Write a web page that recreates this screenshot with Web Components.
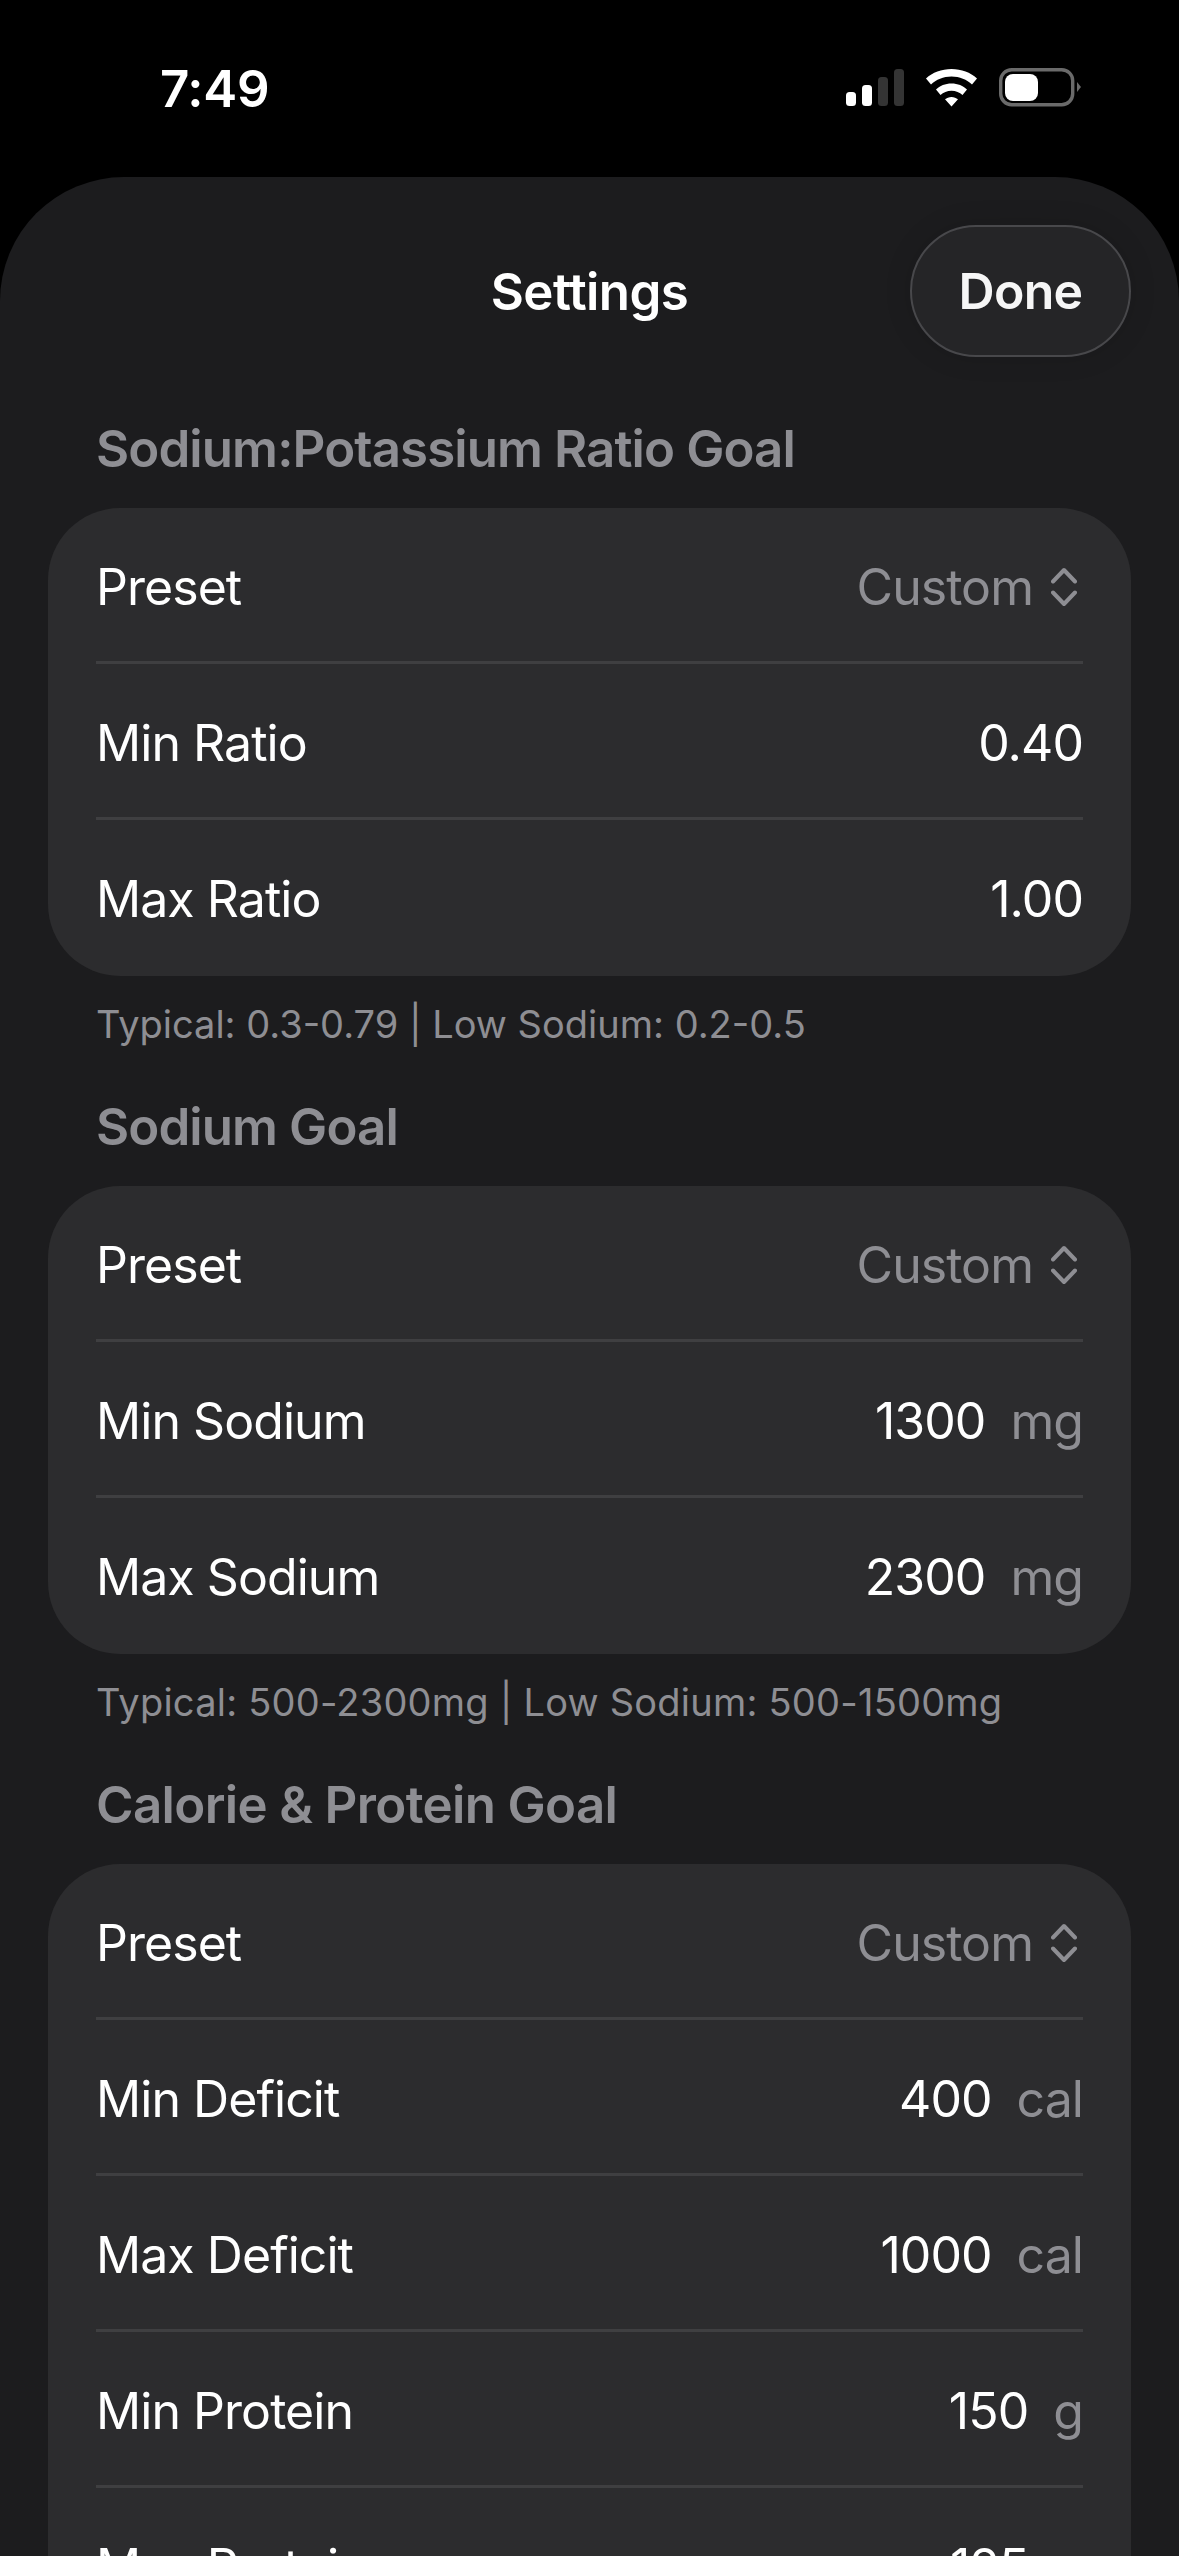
<!DOCTYPE html>
<html><head><meta charset="utf-8"><style>
html,body{margin:0;padding:0;background:#000;height:2556px;overflow:hidden;font-family:Inter,"Liberation Sans",sans-serif;color:#fff}
body{display:flex;flex-direction:column;-webkit-font-smoothing:antialiased}
</style></head><body>
<status-bar time="7:49"></status-bar>
<settings-sheet title-text="Settings" action="Done">
  <settings-section heading="Sodium:Potassium Ratio Goal" note="Typical: 0.3-0.79 | Low Sodium: 0.2-0.5">
    <settings-row label="Preset" picker="Custom"></settings-row>
    <settings-row label="Min Ratio" value="0.40"></settings-row>
    <settings-row label="Max Ratio" value="1.00" last></settings-row>
  </settings-section>
  <settings-section heading="Sodium Goal" note="Typical: 500-2300mg | Low Sodium: 500-1500mg" style="--note-spacing:.22px">
    <settings-row label="Preset" picker="Custom"></settings-row>
    <settings-row label="Min Sodium" value="1300" unit="mg"></settings-row>
    <settings-row label="Max Sodium" value="2300" unit="mg" last></settings-row>
  </settings-section>
  <settings-section heading="Calorie &amp; Protein Goal" style="--head-spacing:-.65px">
    <settings-row label="Preset" picker="Custom"></settings-row>
    <settings-row label="Min Deficit" value="400" unit="cal"></settings-row>
    <settings-row label="Max Deficit" value="1000" unit="cal"></settings-row>
    <settings-row label="Min Protein" value="150" unit="g"></settings-row>
    <settings-row label="Max Protein" value="125" unit="g" last></settings-row>
  </settings-section>
</settings-sheet>
<script>
class StatusBar extends HTMLElement{constructor(){super();const s=this.attachShadow({mode:'open'});
s.innerHTML=`<style>:host{display:flex;flex:none;height:177px;box-sizing:border-box;padding:0 98px 0 160px;justify-content:space-between;align-items:flex-start;background:#000}
.t{font:600 51px/1 Inter,sans-serif;letter-spacing:-.3px;margin-top:63px;color:#fff}
svg{display:block;margin-top:68px}</style>
<div class="t">${this.getAttribute('time')}</div>
<svg width="236" height="40" viewBox="0 0 236 40">
<rect x="1" y="24" width="10" height="14" rx="3.5" fill="#fff"/><rect x="17" y="17" width="10" height="21" rx="3.5" fill="#fff"/>
<rect x="33" y="9" width="10" height="29" rx="3.5" fill="#343434"/><rect x="49" y="1" width="10" height="37" rx="3.5" fill="#343434"/>
<path d="M81 10.500C87.500 4.500 96.500 1 106.500 1S125.500 4.500 132 10.500L127 16.500C122 11.500 114.500 8.500 106.500 8.500S91 11.500 86 16.500Z M91 21.500C94.800 17.800 100.300 15.500 106.500 15.500S118.200 17.800 122 21.500L117.500 27C114.700 24.300 110.800 22.700 106.500 22.700S98.300 24.300 95.500 27Z M100 31.300C101.700 29.800 104 28.900 106.500 28.900S111.300 29.800 113 31.300L106.500 38.500Z" fill="#fff"/>
<rect x="155.700" y="1.700" width="72" height="35" rx="11" fill="none" stroke="#6a6a6a" stroke-width="3.400"/>
<rect x="160" y="6" width="33" height="27" rx="8" fill="#fff"/>
<path d="M232 14L236 19L232 24Z" fill="#6a6a6a"/>
</svg>`}}
customElements.define('status-bar',StatusBar);

class SettingsSheet extends HTMLElement{constructor(){super();const s=this.attachShadow({mode:'open'});
s.innerHTML=`<style>:host{display:block;flex:1;background:#1c1c1e;border-radius:124px 124px 0 0;overflow:hidden;padding:0 48px}
nav{display:grid;grid-template-columns:1fr auto 1fr;align-items:center;height:132px;padding-top:48px;margin-bottom:62px}
h1{grid-column:2;margin:0;font:600 51px/1 Inter,sans-serif;letter-spacing:-.6px;color:#fff}
button{grid-column:3;justify-self:end;width:221px;height:132px;border-radius:66px;background:#252527;border:2.500px solid #48484b;color:#f6f6f6;font:600 50px/1 Inter,sans-serif;letter-spacing:-.7px;padding:0;box-shadow:0 0 28px rgba(0,0,0,.12)}
.c{display:flex;flex-direction:column}</style>
<nav><h1>${this.getAttribute('title-text')}</h1><button>${this.getAttribute('action')}</button></nav>
<div class="c"><slot></slot></div>`}}
customElements.define('settings-sheet',SettingsSheet);

class SettingsSection extends HTMLElement{constructor(){super();const s=this.attachShadow({mode:'open'});
const n=this.getAttribute('note');
s.innerHTML=`<style>:host{display:block;height:678px}
h2{margin:0 0 0 48px;height:60px;font:600 51px/60px Inter,sans-serif;letter-spacing:var(--head-spacing,-.9px);color:#8e8e93}
.card{margin-top:29px;background:#2c2c2e;border-radius:72px;padding:0 48px}
p{margin:25px 0 0 48px;font:400 38px/46px Inter,sans-serif;letter-spacing:var(--note-spacing,0);color:#8e8e93;white-space:nowrap}</style>
<h2>${this.getAttribute('heading').replace('&','&amp;')}</h2><div class="card"><slot></slot></div>${n?`<p>${n}</p>`:''}`}}
customElements.define('settings-section',SettingsSection);

class SettingsRow extends HTMLElement{constructor(){super();const s=this.attachShadow({mode:'open'});
const g=a=>this.getAttribute(a);let r='';
if(g('picker'))r=`<span class="m">${g('picker')}</span><svg width="26" height="40" viewBox="0 0 26 40"><path d="M2 14.500L13 3L24 14.500M2 25.500L13 37L24 25.500" fill="none" stroke="#8e8e93" stroke-width="4" stroke-linecap="round" stroke-linejoin="round"/></svg>`;
else{r=`<span>${g('value')}</span>`;if(g('unit'))r+=`<span class="m">${g('unit')}</span>`}
s.innerHTML=`<style>:host{display:flex;height:156px;box-sizing:border-box;align-items:center;justify-content:space-between;border-bottom:3px solid #3f3f41;font:400 50px/1 Inter,sans-serif;letter-spacing:-.95px;color:#fff;padding-top:4px}
:host([last]){border-bottom:0;padding-top:1px}
.r{display:flex;align-items:center;gap:25px}.m{color:#8e8e93}
:host([picker]) .r{gap:18px;padding-right:6px}
svg{flex:none}</style>
<span>${g('label')}</span><span class="r">${r}</span>`}}
customElements.define('settings-row',SettingsRow);
</script>
</body></html>
